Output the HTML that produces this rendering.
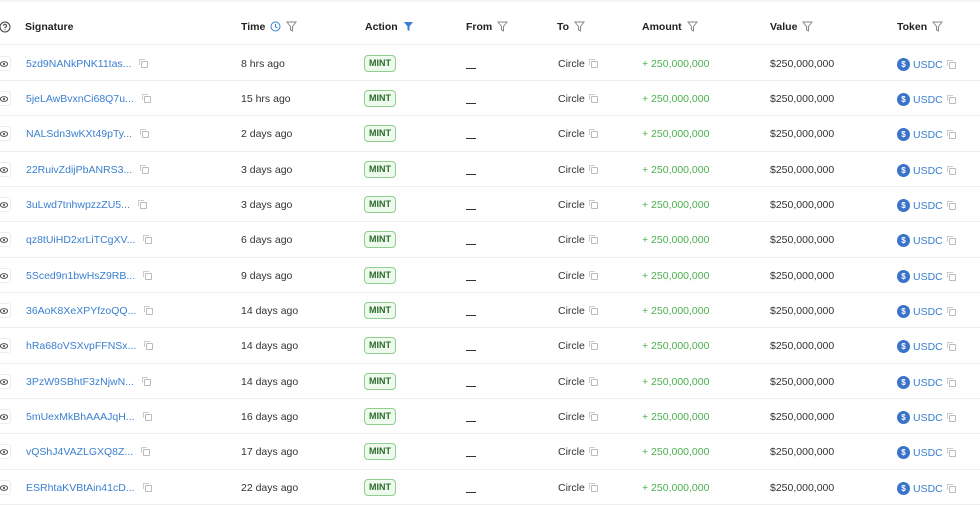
<!DOCTYPE html>
<html><head><meta charset="utf-8"><style>
*{margin:0;padding:0;box-sizing:border-box}
body{width:980px;height:502px;overflow:hidden;background:#fff;font-family:"Liberation Sans",Arial,sans-serif;font-size:10.5px;color:#333;position:relative}
.top{position:absolute;left:0;top:0;width:980px;height:2px;background:#f3f3f3}
.hdr{position:absolute;top:0;left:0;width:980px;height:45px;border-bottom:1px solid #eee}
.h{position:absolute;top:21px;font-weight:bold;color:#222;font-size:10.5px}
.f{display:inline-block;vertical-align:-2px;margin-left:5px}
.row{position:absolute;left:0;width:980px;height:35.33px;border-bottom:1px solid #eee}
.c{position:absolute;top:12px;white-space:nowrap}
.eye{position:absolute;left:-5px;top:10px;width:16px;height:15px;border:1px solid #ececec;border-radius:3px;background:#fff}
.eye svg{position:absolute;left:4px;top:3px}
.sig{left:26px;color:#3a7fd0}
.cp{display:inline-block;width:7px;height:7px;border:1px solid #bbb;border-radius:1px;margin-left:6px;vertical-align:-1px;position:relative}
.cp:after{content:"";position:absolute;left:-3px;top:-3px;width:5px;height:5px;border-left:1px solid #ccc;border-top:1px solid #ccc}
.sig .cp{margin-left:10px}
.t{left:241px}
.m{position:absolute;left:364px;top:9px;width:32px;height:17px;border:1px solid #8fd08f;background:#eefaee;border-radius:4px;font-size:9px;font-weight:bold;color:#2b6b2b;text-align:center;line-height:15px}
.d{position:absolute;left:466px;top:22px;width:10px;height:1px;background:#333}
.to{left:558px}
.am{left:642px;color:#4caf50}
.v{left:770px}
.tk{left:897px;color:#3a7fd0}
.coin{display:inline-block;width:13px;height:13px;border-radius:50%;background:#3b73c9;vertical-align:-3px;margin-right:3px;position:relative}
.coin:after{content:"$";position:absolute;left:0;top:0;width:13px;text-align:center;color:#fff;font-size:8px;line-height:13px;font-weight:bold}
</style></head><body>
<div class="top"></div>
<div class="hdr">
<svg style="position:absolute;left:-1px;top:21px" width="12" height="12" viewBox="0 0 12 12"><circle cx="6" cy="6" r="5" fill="none" stroke="#444" stroke-width="1"/><path d="M4.5 4.8a1.5 1.5 0 1 1 1.5 1.5v1" fill="none" stroke="#444"/><circle cx="6" cy="8.8" r=".6" fill="#444"/></svg>
<div class="h" style="left:25px">Signature</div>
<div class="h" style="left:241px">Time<svg class="f" width="11" height="11" viewBox="0 0 11 11"><circle cx="5.5" cy="5.5" r="4.5" fill="none" stroke="#3a7fd0"/><path d="M5.5 3v2.7l1.8 1" fill="none" stroke="#3a7fd0"/></svg><svg class="f" width="11" height="11" viewBox="0 0 11 11"><path d="M1 1h9L6.5 5.5V10L4.5 9V5.5z" fill="none" stroke="#888"/></svg></div>
<div class="h" style="left:365px">Action<svg class="f" width="11" height="11" viewBox="0 0 11 11"><path d="M1 1h9L6.5 5.5V10L4.5 9V5.5z" fill="#3a7fd0"/></svg></div>
<div class="h" style="left:466px">From<svg class="f" width="11" height="11" viewBox="0 0 11 11"><path d="M1 1h9L6.5 5.5V10L4.5 9V5.5z" fill="none" stroke="#888"/></svg></div>
<div class="h" style="left:557px">To<svg class="f" width="11" height="11" viewBox="0 0 11 11"><path d="M1 1h9L6.5 5.5V10L4.5 9V5.5z" fill="none" stroke="#888"/></svg></div>
<div class="h" style="left:642px">Amount<svg class="f" width="11" height="11" viewBox="0 0 11 11"><path d="M1 1h9L6.5 5.5V10L4.5 9V5.5z" fill="none" stroke="#888"/></svg></div>
<div class="h" style="left:770px">Value<svg class="f" width="11" height="11" viewBox="0 0 11 11"><path d="M1 1h9L6.5 5.5V10L4.5 9V5.5z" fill="none" stroke="#888"/></svg></div>
<div class="h" style="left:897px">Token<svg class="f" width="11" height="11" viewBox="0 0 11 11"><path d="M1 1h9L6.5 5.5V10L4.5 9V5.5z" fill="none" stroke="#888"/></svg></div>
</div>

<div class="row" style="top:45.5px"><div class="eye"><svg width="8" height="8" viewBox="0 0 8 8"><ellipse cx="4" cy="4" rx="3.6" ry="2.4" fill="none" stroke="#555"/><circle cx="4" cy="4" r="1.1" fill="#555"/></svg></div><div class="c sig">5zd9NANkPNK11tas...<span class="cp"></span></div><div class="c t">8 hrs ago</div><div class="m">MINT</div><div class="d"></div><div class="c to">Circle<span class="cp"></span></div><div class="c am">+ 250,000,000</div><div class="c v">$250,000,000</div><div class="c tk"><span class="coin"></span>USDC<span class="cp"></span></div></div>
<div class="row" style="top:80.8px"><div class="eye"><svg width="8" height="8" viewBox="0 0 8 8"><ellipse cx="4" cy="4" rx="3.6" ry="2.4" fill="none" stroke="#555"/><circle cx="4" cy="4" r="1.1" fill="#555"/></svg></div><div class="c sig">5jeLAwBvxnCi68Q7u...<span class="cp"></span></div><div class="c t">15 hrs ago</div><div class="m">MINT</div><div class="d"></div><div class="c to">Circle<span class="cp"></span></div><div class="c am">+ 250,000,000</div><div class="c v">$250,000,000</div><div class="c tk"><span class="coin"></span>USDC<span class="cp"></span></div></div>
<div class="row" style="top:116.2px"><div class="eye"><svg width="8" height="8" viewBox="0 0 8 8"><ellipse cx="4" cy="4" rx="3.6" ry="2.4" fill="none" stroke="#555"/><circle cx="4" cy="4" r="1.1" fill="#555"/></svg></div><div class="c sig">NALSdn3wKXt49pTy...<span class="cp"></span></div><div class="c t">2 days ago</div><div class="m">MINT</div><div class="d"></div><div class="c to">Circle<span class="cp"></span></div><div class="c am">+ 250,000,000</div><div class="c v">$250,000,000</div><div class="c tk"><span class="coin"></span>USDC<span class="cp"></span></div></div>
<div class="row" style="top:151.5px"><div class="eye"><svg width="8" height="8" viewBox="0 0 8 8"><ellipse cx="4" cy="4" rx="3.6" ry="2.4" fill="none" stroke="#555"/><circle cx="4" cy="4" r="1.1" fill="#555"/></svg></div><div class="c sig">22RuivZdijPbANRS3...<span class="cp"></span></div><div class="c t">3 days ago</div><div class="m">MINT</div><div class="d"></div><div class="c to">Circle<span class="cp"></span></div><div class="c am">+ 250,000,000</div><div class="c v">$250,000,000</div><div class="c tk"><span class="coin"></span>USDC<span class="cp"></span></div></div>
<div class="row" style="top:186.8px"><div class="eye"><svg width="8" height="8" viewBox="0 0 8 8"><ellipse cx="4" cy="4" rx="3.6" ry="2.4" fill="none" stroke="#555"/><circle cx="4" cy="4" r="1.1" fill="#555"/></svg></div><div class="c sig">3uLwd7tnhwpzzZU5...<span class="cp"></span></div><div class="c t">3 days ago</div><div class="m">MINT</div><div class="d"></div><div class="c to">Circle<span class="cp"></span></div><div class="c am">+ 250,000,000</div><div class="c v">$250,000,000</div><div class="c tk"><span class="coin"></span>USDC<span class="cp"></span></div></div>
<div class="row" style="top:222.2px"><div class="eye"><svg width="8" height="8" viewBox="0 0 8 8"><ellipse cx="4" cy="4" rx="3.6" ry="2.4" fill="none" stroke="#555"/><circle cx="4" cy="4" r="1.1" fill="#555"/></svg></div><div class="c sig">qz8tUiHD2xrLiTCgXV...<span class="cp"></span></div><div class="c t">6 days ago</div><div class="m">MINT</div><div class="d"></div><div class="c to">Circle<span class="cp"></span></div><div class="c am">+ 250,000,000</div><div class="c v">$250,000,000</div><div class="c tk"><span class="coin"></span>USDC<span class="cp"></span></div></div>
<div class="row" style="top:257.5px"><div class="eye"><svg width="8" height="8" viewBox="0 0 8 8"><ellipse cx="4" cy="4" rx="3.6" ry="2.4" fill="none" stroke="#555"/><circle cx="4" cy="4" r="1.1" fill="#555"/></svg></div><div class="c sig">5Sced9n1bwHsZ9RB...<span class="cp"></span></div><div class="c t">9 days ago</div><div class="m">MINT</div><div class="d"></div><div class="c to">Circle<span class="cp"></span></div><div class="c am">+ 250,000,000</div><div class="c v">$250,000,000</div><div class="c tk"><span class="coin"></span>USDC<span class="cp"></span></div></div>
<div class="row" style="top:292.8px"><div class="eye"><svg width="8" height="8" viewBox="0 0 8 8"><ellipse cx="4" cy="4" rx="3.6" ry="2.4" fill="none" stroke="#555"/><circle cx="4" cy="4" r="1.1" fill="#555"/></svg></div><div class="c sig">36AoK8XeXPYfzoQQ...<span class="cp"></span></div><div class="c t">14 days ago</div><div class="m">MINT</div><div class="d"></div><div class="c to">Circle<span class="cp"></span></div><div class="c am">+ 250,000,000</div><div class="c v">$250,000,000</div><div class="c tk"><span class="coin"></span>USDC<span class="cp"></span></div></div>
<div class="row" style="top:328.2px"><div class="eye"><svg width="8" height="8" viewBox="0 0 8 8"><ellipse cx="4" cy="4" rx="3.6" ry="2.4" fill="none" stroke="#555"/><circle cx="4" cy="4" r="1.1" fill="#555"/></svg></div><div class="c sig">hRa68oVSXvpFFNSx...<span class="cp"></span></div><div class="c t">14 days ago</div><div class="m">MINT</div><div class="d"></div><div class="c to">Circle<span class="cp"></span></div><div class="c am">+ 250,000,000</div><div class="c v">$250,000,000</div><div class="c tk"><span class="coin"></span>USDC<span class="cp"></span></div></div>
<div class="row" style="top:363.5px"><div class="eye"><svg width="8" height="8" viewBox="0 0 8 8"><ellipse cx="4" cy="4" rx="3.6" ry="2.4" fill="none" stroke="#555"/><circle cx="4" cy="4" r="1.1" fill="#555"/></svg></div><div class="c sig">3PzW9SBhtF3zNjwN...<span class="cp"></span></div><div class="c t">14 days ago</div><div class="m">MINT</div><div class="d"></div><div class="c to">Circle<span class="cp"></span></div><div class="c am">+ 250,000,000</div><div class="c v">$250,000,000</div><div class="c tk"><span class="coin"></span>USDC<span class="cp"></span></div></div>
<div class="row" style="top:398.8px"><div class="eye"><svg width="8" height="8" viewBox="0 0 8 8"><ellipse cx="4" cy="4" rx="3.6" ry="2.4" fill="none" stroke="#555"/><circle cx="4" cy="4" r="1.1" fill="#555"/></svg></div><div class="c sig">5mUexMkBhAAAJqH...<span class="cp"></span></div><div class="c t">16 days ago</div><div class="m">MINT</div><div class="d"></div><div class="c to">Circle<span class="cp"></span></div><div class="c am">+ 250,000,000</div><div class="c v">$250,000,000</div><div class="c tk"><span class="coin"></span>USDC<span class="cp"></span></div></div>
<div class="row" style="top:434.2px"><div class="eye"><svg width="8" height="8" viewBox="0 0 8 8"><ellipse cx="4" cy="4" rx="3.6" ry="2.4" fill="none" stroke="#555"/><circle cx="4" cy="4" r="1.1" fill="#555"/></svg></div><div class="c sig">vQShJ4VAZLGXQ8Z...<span class="cp"></span></div><div class="c t">17 days ago</div><div class="m">MINT</div><div class="d"></div><div class="c to">Circle<span class="cp"></span></div><div class="c am">+ 250,000,000</div><div class="c v">$250,000,000</div><div class="c tk"><span class="coin"></span>USDC<span class="cp"></span></div></div>
<div class="row" style="top:469.5px"><div class="eye"><svg width="8" height="8" viewBox="0 0 8 8"><ellipse cx="4" cy="4" rx="3.6" ry="2.4" fill="none" stroke="#555"/><circle cx="4" cy="4" r="1.1" fill="#555"/></svg></div><div class="c sig">ESRhtaKVBtAin41cD...<span class="cp"></span></div><div class="c t">22 days ago</div><div class="m">MINT</div><div class="d"></div><div class="c to">Circle<span class="cp"></span></div><div class="c am">+ 250,000,000</div><div class="c v">$250,000,000</div><div class="c tk"><span class="coin"></span>USDC<span class="cp"></span></div></div>
</body></html>
